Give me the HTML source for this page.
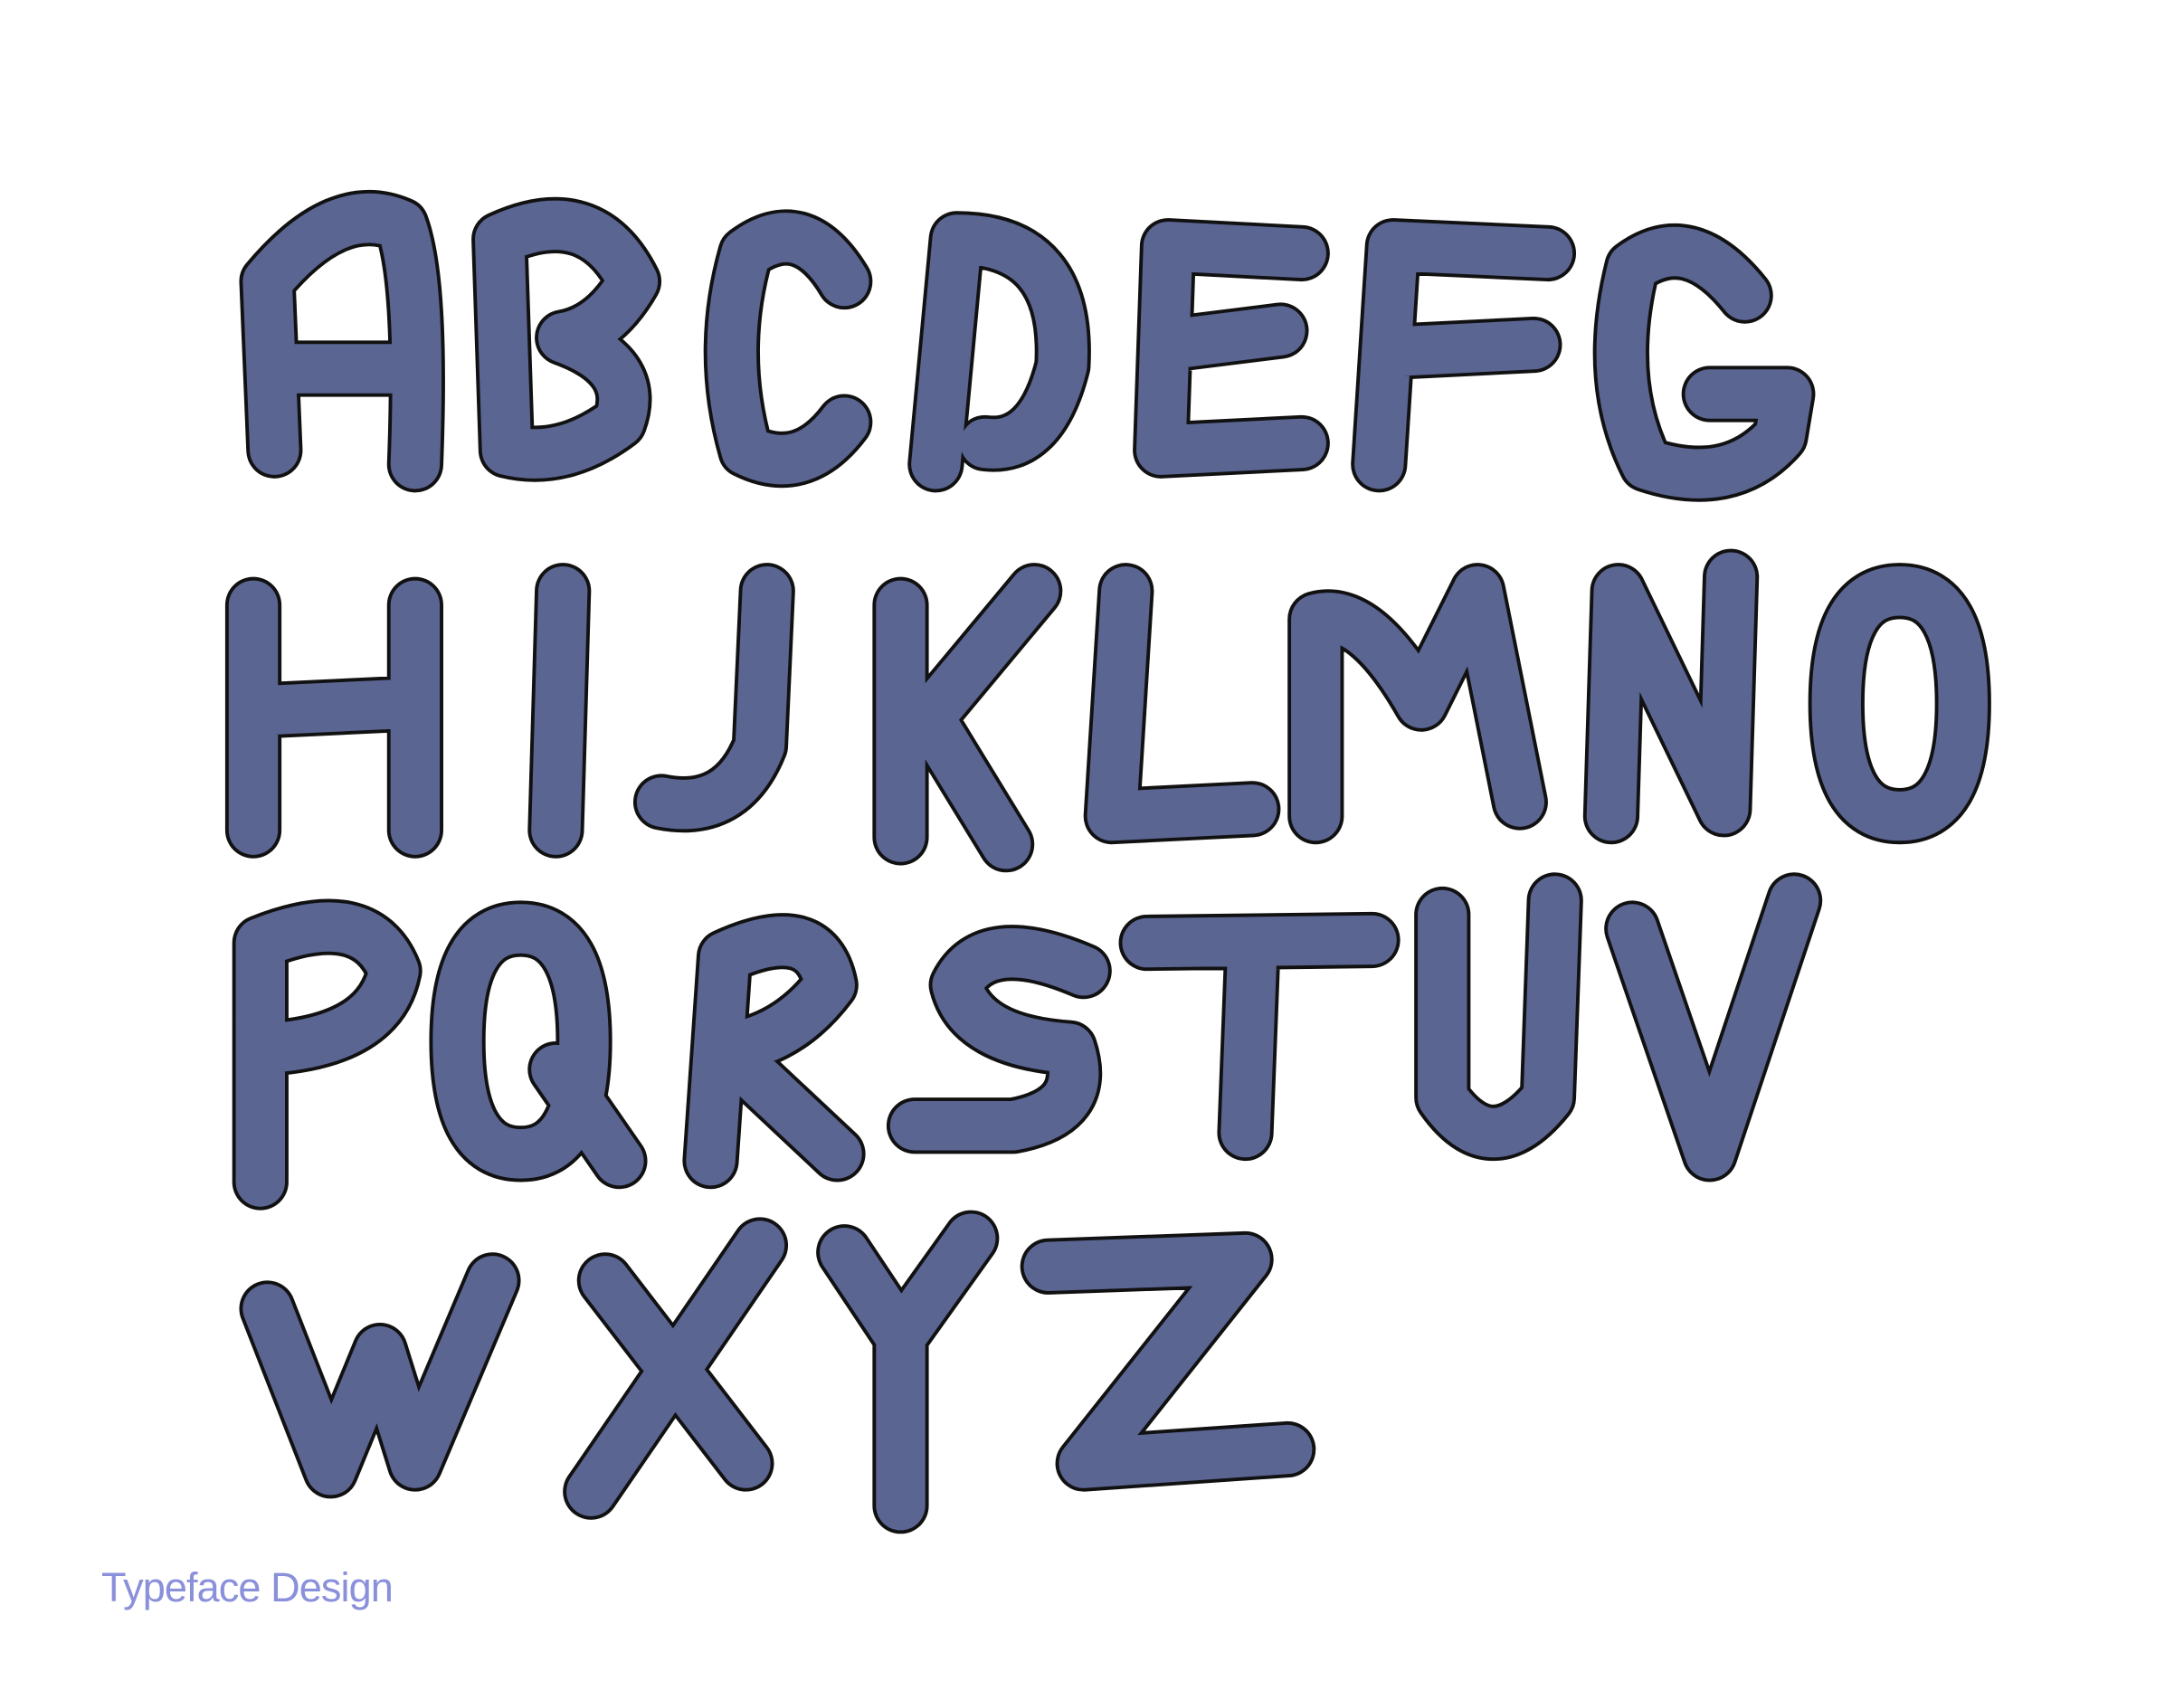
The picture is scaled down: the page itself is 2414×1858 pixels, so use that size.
<!DOCTYPE html>
<html><head><meta charset="utf-8"><style>
html,body{margin:0;padding:0;background:#fff;}
svg{display:block;}
</style></head><body>
<svg width="2414" height="1858" viewBox="0 0 1552 1194.6" xmlns="http://www.w3.org/2000/svg">
<rect width="1552" height="1195" fill="#fff"/>
<g fill="none" stroke-linecap="round" stroke-linejoin="round">
<g id="L" >
<path id="shapes" d="
M195 320 L190 200 Q240 140 285 160 Q300 200 295 330 M200 262 L290 262
M360 320 L355 170 Q420 140 450 200 Q430 235 400 240 Q455 260 440 300 Q400 330 360 320
M600 200 Q570 150 530 180 Q510 250 530 320 Q570 340 600 300
M665 330 L680 170 Q760 170 755 260 Q740 320 700 315
M925 180 L830 175 L825 320 L925 315 M830 245 L910 235
M1100 180 L990 175 L980 330 M990 250 L1090 245
M1240 210 Q1200 160 1160 190 Q1140 270 1170 330 Q1230 350 1265 310 L1270 280 L1215 280
M180 590 L180 430 M295 590 L295 430 M185 505 L290 500
M395 590 L400 420
M545 420 L540 530 Q520 580 470 570
M640 595 L640 430 M735 420 L660 510 L715 600
M800 420 L790 580 L890 575
M935 580 L935 440 Q970 430 1010 500 L1050 420 L1080 570
M1145 580 L1150 420 L1225 575 L1230 410
M1350 420 Q1395 420 1395 500 Q1395 580 1350 580 Q1305 580 1305 500 Q1305 420 1350 420
M185 840 L185 670 Q260 640 280 690 Q270 740 190 745
M370 660 Q415 660 415 740 Q415 820 370 820 Q325 820 325 740 Q325 660 370 660 M395 760 L440 825
M505 825 L515 680 Q580 650 590 700 Q560 740 515 745 L595 820
M770 690 Q700 660 680 700 Q690 740 760 745 Q775 790 720 800 L650 800
M815 670 L975 668 M890 675 L885 805
M1025 650 L1025 780 Q1060 830 1100 780 L1105 640
M1160 660 L1215 820 L1275 640
M190 930 L235 1045 L270 960 L295 1040 L350 910
M430 910 L530 1040 M540 885 L420 1060
M600 890 L640 950 L690 880 M640 950 L640 1070
M745 900 L885 895 L770 1040 L915 1030"/>
</g>
<use href="#shapes" stroke="#111" stroke-width="40"/>
<use href="#shapes" stroke="#5a6592" stroke-width="35"/>
</g>
<text x="72" y="1138" font-family="Liberation Sans, sans-serif" font-size="29" letter-spacing="-0.6" fill="#8a90da" font-weight="300">Typeface Design</text>
</svg>
</body></html>
